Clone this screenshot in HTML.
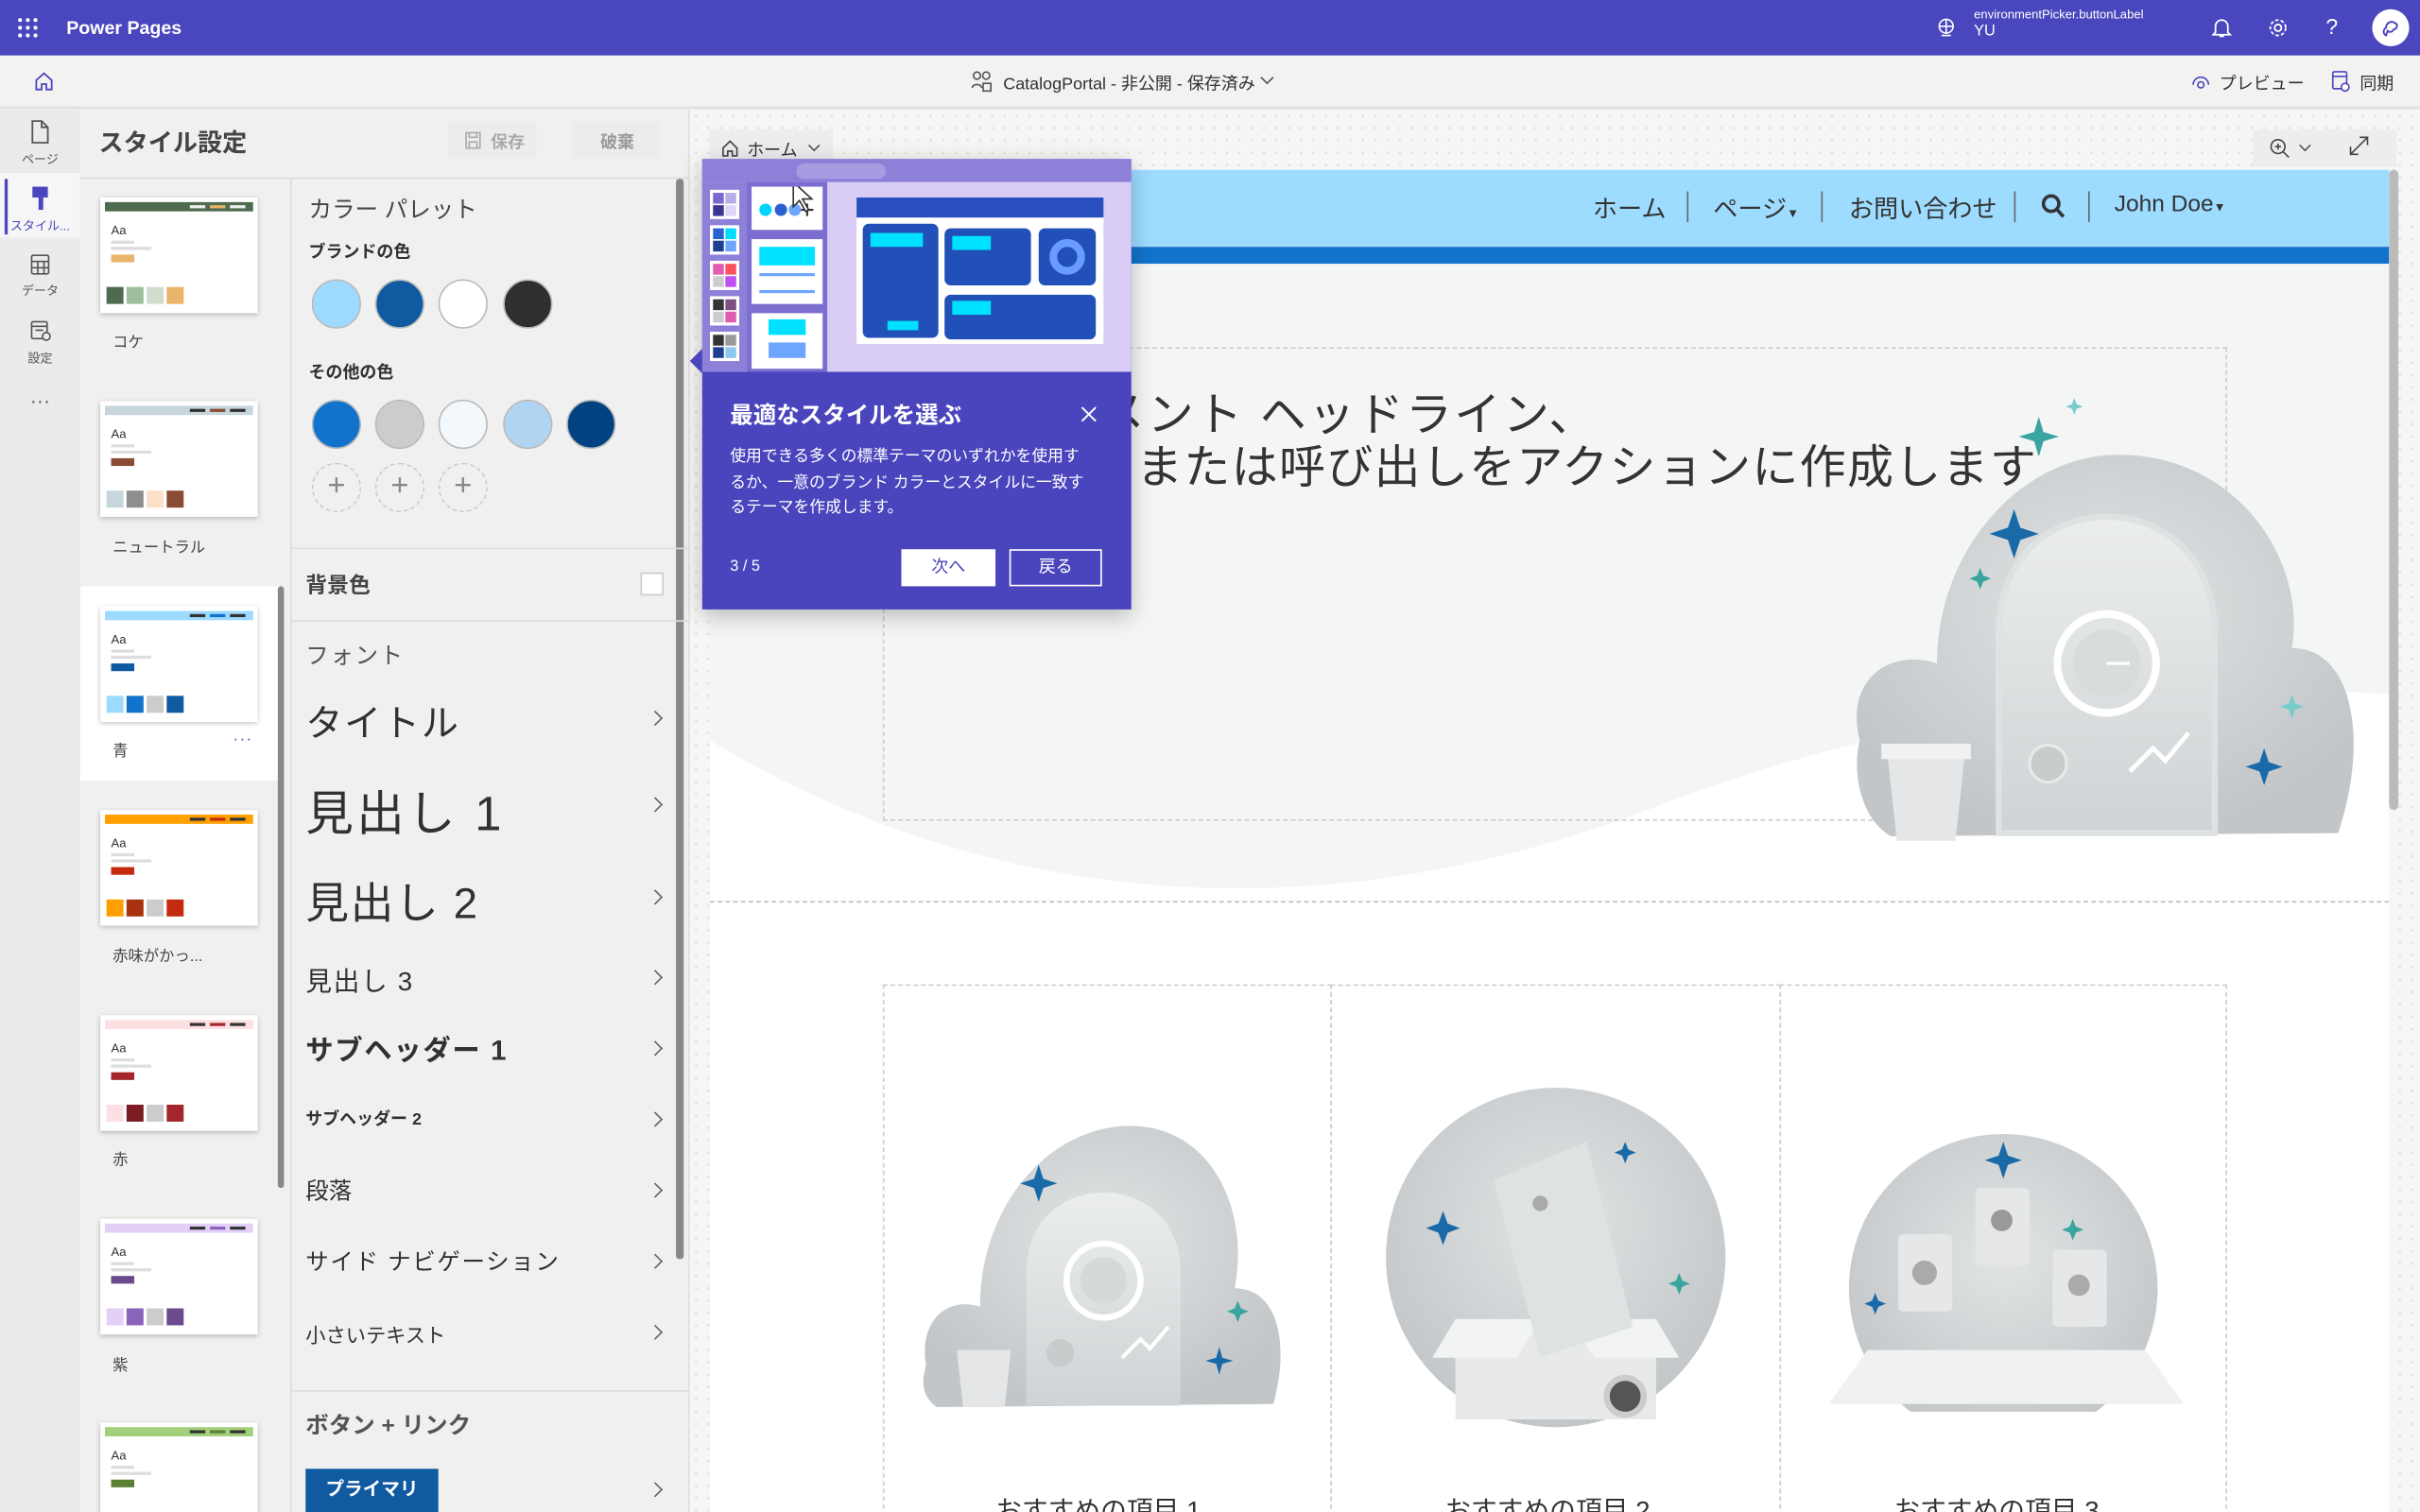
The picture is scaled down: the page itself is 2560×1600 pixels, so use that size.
<!DOCTYPE html>
<html><head><meta charset="utf-8">
<style>
*{box-sizing:border-box;margin:0;padding:0}
html,body{width:2560px;height:1600px;overflow:hidden;background:#fff}
body{font-family:"Liberation Sans","Noto Sans CJK JP",sans-serif;color:#323130}
#w{position:absolute;left:0;top:0;width:1568px;height:980px;transform:scale(1.632653);transform-origin:0 0;overflow:hidden;background:#f3f2f1}
.a{position:absolute}
.t{position:absolute;white-space:nowrap}
.card{position:absolute;left:65px;width:102px;height:75px;background:#fff;box-shadow:0 1px 3px rgba(0,0,0,.25)}
.card .s{position:absolute;left:3px;right:3px;top:3px;height:6px}
.card .d{position:absolute;top:5px;width:10px;height:1.5px;background:#333}
.card .aa{position:absolute;left:7px;top:17px;font-size:8px;color:#333}
.card .l{position:absolute;left:7px;height:1.5px;background:#ddd}
.card .b{position:absolute;left:7px;top:37px;width:15px;height:5px}
.card .sw{position:absolute;top:58px;width:11px;height:11px}
.lbl{position:absolute;left:73px;font-size:10px;color:#444}
.circ{position:absolute;width:32px;height:32px;border-radius:50%;border:1px solid #bbb}
.plus{position:absolute;width:32px;height:32px;border-radius:50%;border:1px dashed #ccc;color:#888;font-size:20px;line-height:29px;text-align:center;font-weight:300}
.fr{position:absolute;left:198px;color:#323130;white-space:nowrap}
.chev{position:absolute;left:421px;width:7px;height:7px;border-right:1px solid #666;border-top:1px solid #666;transform:rotate(45deg)}
.sep{position:absolute;left:188px;width:258px;height:1px;background:#dedede}
.rail{position:absolute;left:0;width:52px;text-align:center;font-size:8px;color:#555}
.nav{position:absolute;top:122px;font-size:16px;color:#333;white-space:nowrap}
.vs{position:absolute;top:124px;width:1px;height:20px;background:#666}
</style></head><body><div id="w">

<!-- top bar -->
<div class="a" style="left:0;top:0;width:1568px;height:36px;background:#4a46bd"></div>
<svg class="a" style="left:11px;top:11px" width="14" height="14"><g fill="#fff"><circle cx="2" cy="2" r="1.3"/><circle cx="7" cy="2" r="1.3"/><circle cx="12" cy="2" r="1.3"/><circle cx="2" cy="7" r="1.3"/><circle cx="7" cy="7" r="1.3"/><circle cx="12" cy="7" r="1.3"/><circle cx="2" cy="12" r="1.3"/><circle cx="7" cy="12" r="1.3"/><circle cx="12" cy="12" r="1.3"/></g></svg>
<div class="t" style="left:43px;top:11px;font-size:12px;color:#fff;font-weight:bold">Power Pages</div>
<svg class="a" style="left:1254px;top:11px" width="14" height="14" fill="none" stroke="#fff" stroke-width="1"><circle cx="7" cy="6" r="4.5"/><path d="M2.5 6h9M7 1.5v9M4 12h6"/></svg>
<div class="t" style="left:1279px;top:5px;font-size:8px;color:#fff">environmentPicker.buttonLabel</div>
<div class="t" style="left:1279px;top:15px;font-size:10px;color:#fff">YU</div>
<svg class="a" style="left:1433px;top:11px" width="13" height="14" fill="none" stroke="#fff" stroke-width="1.1"><path d="M2.5 10V6a4 4 0 0 1 8 0v4l1.5 1.5H1z M5 12.5h3"/></svg>
<svg class="a" style="left:1469px;top:11px" width="14" height="14" fill="none" stroke="#fff" stroke-width="1.1"><circle cx="7" cy="7" r="2.2"/><circle cx="7" cy="7" r="5" stroke-dasharray="2.2 1.4"/></svg>
<div class="t" style="left:1507px;top:9px;font-size:14px;color:#fff">?</div>
<div class="a" style="left:1537px;top:6px;width:24px;height:24px;border-radius:50%;background:#fff"></div>
<svg class="a" style="left:1541px;top:10px" width="16" height="16" fill="none" stroke="#4a46bd" stroke-width="1.2"><path d="M5 13c-2-1-2-4 0-5 0-3 3-5 6-3 2 1 1 4-1 4-1 2-3 2-4 1z"/></svg>

<!-- second bar -->
<div class="a" style="left:0;top:36px;width:1568px;height:34px;background:#f3f2f1;border-bottom:1px solid #e1dfdd;box-shadow:0 1px 2px rgba(0,0,0,.08)"></div>
<svg class="a" style="left:22px;top:46px" width="13" height="13" fill="none" stroke="#4a46bd" stroke-width="1.1"><path d="M1.5 6L6.5 1.5 11.5 6V12H8V8.5H5V12H1.5z"/></svg>
<svg class="a" style="left:629px;top:45px" width="14" height="15" fill="none" stroke="#555" stroke-width="1"><circle cx="4" cy="4" r="2.3"/><circle cx="10" cy="4" r="2.3"/><path d="M1 12c0-3 6-3 6 0M8 9h5v5H8z"/></svg>
<div class="t" style="left:650px;top:46px;font-size:11px;color:#323130">CatalogPortal - 非公開 - 保存済み</div>
<svg class="a" style="left:816px;top:49px" width="10" height="7" fill="none" stroke="#555"><path d="M1 1l4 4 4-4"/></svg>
<svg class="a" style="left:1419px;top:46px" width="14" height="14" fill="none" stroke="#4a46bd" stroke-width="1"><path d="M2 9a5 5 0 0 1 10 0"/><circle cx="7" cy="9" r="2"/></svg>
<div class="t" style="left:1438px;top:46px;font-size:11px;color:#323130">プレビュー</div>
<svg class="a" style="left:1510px;top:45px" width="13" height="15" fill="none" stroke="#4a46bd" stroke-width="1"><rect x="1.5" y="1.5" width="9" height="11" rx="1"/><path d="M1.5 4.5h9"/><circle cx="9.5" cy="11.5" r="2.5" fill="#fff"/></svg>
<div class="t" style="left:1529px;top:46px;font-size:11px;color:#323130">同期</div>

<!-- left rail -->
<div class="a" style="left:0;top:71px;width:52px;height:909px;background:#ebebeb"></div>
<div class="a" style="left:0;top:112px;width:52px;height:42px;background:#f6f6f6"></div>
<div class="a" style="left:3px;top:116px;width:2px;height:36px;background:#4a46bd"></div>
<svg class="a" style="left:19px;top:77px" width="14" height="17" fill="none" stroke="#555" stroke-width="1.1"><path d="M2 1.5h6l4 4V15.5H2z M8 1.5v4h4"/></svg>
<div class="rail" style="top:98px">ページ</div>
<svg class="a" style="left:19px;top:120px" width="14" height="17"><rect x="2" y="1" width="10" height="7" fill="#4a46bd"/><rect x="6" y="8" width="3" height="8" fill="#4a46bd"/></svg>
<div class="rail" style="top:141px;color:#4a46bd">スタイル...</div>
<svg class="a" style="left:19px;top:164px" width="14" height="15" fill="none" stroke="#555" stroke-width="1"><rect x="1.5" y="1.5" width="11" height="12" rx="1"/><path d="M1.5 5.5h11M1.5 9.5h11M5.5 5.5v8M9.5 5.5v8"/></svg>
<div class="rail" style="top:183px">データ</div>
<svg class="a" style="left:19px;top:207px" width="15" height="15" fill="none" stroke="#555" stroke-width="1"><rect x="1.5" y="1.5" width="10" height="11" rx="1"/><path d="M1.5 4.5h10M4 7h5"/><circle cx="11" cy="11" r="2.5" fill="#ebebeb"/></svg>
<div class="rail" style="top:227px">設定</div>
<div class="rail" style="top:252px;font-size:13px;color:#555">···</div>

<!-- style panel -->
<div class="a" style="left:52px;top:71px;width:395px;height:909px;background:#f0f0f0;border-right:1px solid #e0e0e0"></div>
<div class="t" style="left:64px;top:79px;font-size:16px;font-weight:bold;color:#444">スタイル設定</div>
<div class="a" style="left:290px;top:79px;width:58px;height:24px;background:#ececec"></div>
<svg class="a" style="left:301px;top:85px" width="11" height="12" fill="none" stroke="#aaa"><rect x="1" y="1" width="9" height="10"/><path d="M3 1v3h5V1M3 11V7h5v4"/></svg>
<div class="t" style="left:318px;top:84px;font-size:11px;color:#aaa;font-weight:bold">保存</div>
<div class="a" style="left:370px;top:79px;width:58px;height:24px;background:#ececec"></div>
<div class="t" style="left:389px;top:84px;font-size:11px;color:#999;font-weight:bold">破棄</div>
<div class="a" style="left:52px;top:115px;width:395px;height:1px;background:#dcdcdc"></div>
<div class="a" style="left:188px;top:115px;width:1px;height:865px;background:#dcdcdc"></div>

<div class="a" style="left:52px;top:380px;width:131px;height:126px;background:#fff"></div>
<div class="a" style="left:180px;top:380px;width:4px;height:390px;background:#888;border-radius:2px"></div>

<!-- cards -->
<div class="card" style="top:128px"><div class="s" style="background:#4f6b4f"></div><div class="d" style="left:58px;background:#eee"></div><div class="d" style="left:71px;background:#e9b56a"></div><div class="d" style="left:84px;background:#eee"></div><div class="aa">Aa</div><div class="l" style="top:28px;width:15px"></div><div class="l" style="top:32px;width:26px"></div><div class="b" style="background:#e9b56a"></div><div class="sw" style="left:4px;background:#4f6b4f"></div><div class="sw" style="left:17px;background:#9dbf9d"></div><div class="sw" style="left:30px;background:#d0dccc"></div><div class="sw" style="left:43px;background:#e9b56a"></div></div>
<div class="lbl" style="top:213px">コケ</div>
<div class="card" style="top:260px"><div class="s" style="background:#c6d6dc"></div><div class="d" style="left:58px"></div><div class="d" style="left:71px;background:#8a4a33"></div><div class="d" style="left:84px"></div><div class="aa">Aa</div><div class="l" style="top:28px;width:15px"></div><div class="l" style="top:32px;width:26px"></div><div class="b" style="background:#8a4a33"></div><div class="sw" style="left:4px;background:#c6d6dc"></div><div class="sw" style="left:17px;background:#8e8e8e"></div><div class="sw" style="left:30px;background:#fbe0c8"></div><div class="sw" style="left:43px;background:#8a4a33"></div></div>
<div class="lbl" style="top:346px">ニュートラル</div>
<div class="card" style="top:393px"><div class="s" style="background:#9ddaff"></div><div class="d" style="left:58px"></div><div class="d" style="left:71px;background:#1273cc"></div><div class="d" style="left:84px"></div><div class="aa">Aa</div><div class="l" style="top:28px;width:15px"></div><div class="l" style="top:32px;width:26px"></div><div class="b" style="background:#0f5aa0"></div><div class="sw" style="left:4px;background:#9ddaff"></div><div class="sw" style="left:17px;background:#1273cc"></div><div class="sw" style="left:30px;background:#ccc"></div><div class="sw" style="left:43px;background:#0f5aa0"></div></div>
<div class="lbl" style="top:478px">青</div>
<div class="t" style="left:151px;top:474px;font-size:10px;color:#4a46bd;letter-spacing:1px">···</div>
<div class="card" style="top:525px"><div class="s" style="background:#ffa000"></div><div class="d" style="left:58px"></div><div class="d" style="left:71px;background:#c42b0e"></div><div class="d" style="left:84px"></div><div class="aa">Aa</div><div class="l" style="top:28px;width:15px"></div><div class="l" style="top:32px;width:26px"></div><div class="b" style="background:#c42b0e"></div><div class="sw" style="left:4px;background:#ffa000"></div><div class="sw" style="left:17px;background:#a8320e"></div><div class="sw" style="left:30px;background:#ccc"></div><div class="sw" style="left:43px;background:#c42b0e"></div></div>
<div class="lbl" style="top:611px">赤味がかっ...</div>
<div class="card" style="top:658px"><div class="s" style="background:#fde0e4"></div><div class="d" style="left:58px"></div><div class="d" style="left:71px;background:#a4262c"></div><div class="d" style="left:84px"></div><div class="aa">Aa</div><div class="l" style="top:28px;width:15px"></div><div class="l" style="top:32px;width:26px"></div><div class="b" style="background:#a4262c"></div><div class="sw" style="left:4px;background:#fde0e4"></div><div class="sw" style="left:17px;background:#7b1c22"></div><div class="sw" style="left:30px;background:#ccc"></div><div class="sw" style="left:43px;background:#a4262c"></div></div>
<div class="lbl" style="top:743px">赤</div>
<div class="card" style="top:790px"><div class="s" style="background:#e4cff7"></div><div class="d" style="left:58px"></div><div class="d" style="left:71px;background:#8a63bc"></div><div class="d" style="left:84px"></div><div class="aa">Aa</div><div class="l" style="top:28px;width:15px"></div><div class="l" style="top:32px;width:26px"></div><div class="b" style="background:#6b4a8e"></div><div class="sw" style="left:4px;background:#e4cff7"></div><div class="sw" style="left:17px;background:#8a63bc"></div><div class="sw" style="left:30px;background:#ccc"></div><div class="sw" style="left:43px;background:#6b4a8e"></div></div>
<div class="lbl" style="top:876px">紫</div>
<div class="card" style="top:922px"><div class="s" style="background:#a4cf7a"></div><div class="d" style="left:58px"></div><div class="d" style="left:71px;background:#5a7f35"></div><div class="d" style="left:84px"></div><div class="aa">Aa</div><div class="l" style="top:28px;width:15px"></div><div class="l" style="top:32px;width:26px"></div><div class="b" style="background:#5a7f35"></div></div>

<!-- color panel -->
<div class="a" style="left:438px;top:116px;width:5px;height:700px;background:#888;border-radius:2px"></div>
<div class="fr" style="left:200px;top:125px;font-size:15px;color:#444">カラー パレット</div>
<div class="fr" style="left:200px;top:155px;font-size:11px;font-weight:bold">ブランドの色</div>
<div class="circ" style="left:202px;top:181px;background:#9ddaff"></div>
<div class="circ" style="left:243px;top:181px;background:#0f5aa0"></div>
<div class="circ" style="left:284px;top:181px;background:#fff"></div>
<div class="circ" style="left:326px;top:181px;background:#2f2f2f"></div>
<div class="fr" style="left:200px;top:233px;font-size:11px;font-weight:bold">その他の色</div>
<div class="circ" style="left:202px;top:259px;background:#1273cc"></div>
<div class="circ" style="left:243px;top:259px;background:#cccccc"></div>
<div class="circ" style="left:284px;top:259px;background:#f3f8fc"></div>
<div class="circ" style="left:326px;top:259px;background:#b0d4f1"></div>
<div class="circ" style="left:367px;top:259px;background:#004282"></div>
<div class="plus" style="left:202px;top:300px">+</div>
<div class="plus" style="left:243px;top:300px">+</div>
<div class="plus" style="left:284px;top:300px">+</div>
<div class="sep" style="top:355px"></div>
<div class="fr" style="top:369px;font-size:14px;font-weight:bold;color:#444">背景色</div>
<div class="a" style="left:415px;top:371px;width:15px;height:15px;background:#fff;border:1px solid #ccc"></div>
<div class="sep" style="top:402px"></div>
<div class="fr" style="top:414px;font-size:15px;color:#555;letter-spacing:1px">フォント</div>
<div class="fr" style="top:449px;font-size:24px;letter-spacing:1px">タイトル</div><div class="chev" style="top:462px"></div>
<div class="fr" style="top:502px;font-size:31px;letter-spacing:2px">見出し 1</div><div class="chev" style="top:518px"></div>
<div class="fr" style="top:564px;font-size:28px;letter-spacing:1px">見出し 2</div><div class="chev" style="top:578px"></div>
<div class="fr" style="top:622px;font-size:17px;letter-spacing:1px">見出し 3</div><div class="chev" style="top:630px"></div>
<div class="fr" style="top:667px;font-size:18px;font-weight:bold;letter-spacing:1px">サブヘッダー 1</div><div class="chev" style="top:676px"></div>
<div class="fr" style="top:717px;font-size:11px;font-weight:bold">サブヘッダー 2</div><div class="chev" style="top:722px"></div>
<div class="fr" style="top:761px;font-size:15px">段落</div><div class="chev" style="top:768px"></div>
<div class="fr" style="top:807px;font-size:15px;letter-spacing:1px">サイド ナビゲーション</div><div class="chev" style="top:814px"></div>
<div class="fr" style="top:855px;font-size:13px">小さいテキスト</div><div class="chev" style="top:860px"></div>
<div class="sep" style="top:901px"></div>
<div class="fr" style="top:913px;font-size:15px;font-weight:bold;color:#555">ボタン + リンク</div>
<div class="a" style="left:198px;top:952px;width:86px;height:30px;background:#0f5aa0;color:#fff;font-size:12px;font-weight:bold;text-align:center;line-height:26px">プライマリ</div>
<div class="chev" style="top:962px"></div>

<!-- canvas -->
<div class="a" style="left:447px;top:71px;width:1121px;height:909px;background-color:#f7f6f5;background-image:radial-gradient(#e4e2e0 0.8px,transparent 1px);background-size:8px 8px"></div>
<div class="a" style="left:460px;top:84px;width:80px;height:24px;background:#eeeded"></div>
<svg class="a" style="left:467px;top:90px" width="12" height="12" fill="none" stroke="#444" stroke-width="1"><path d="M1.5 6L6 1.5 10.5 6V11H7.5V8H4.5V11H1.5z"/></svg>
<div class="t" style="left:484px;top:89px;font-size:11px;color:#333">ホーム</div>
<svg class="a" style="left:523px;top:93px" width="9" height="6" fill="none" stroke="#555"><path d="M1 1l3.5 3.5L8 1"/></svg>
<div class="a" style="left:1460px;top:84px;width:93px;height:24px;background:#eeeded"></div>
<svg class="a" style="left:1470px;top:89px" width="14" height="14" fill="none" stroke="#444" stroke-width="1"><circle cx="6" cy="6" r="4.5"/><path d="M9.5 9.5L13 13M6 4v4M4 6h4"/></svg>
<svg class="a" style="left:1489px;top:93px" width="9" height="6" fill="none" stroke="#555"><path d="M1 1l3.5 3.5L8 1"/></svg>
<svg class="a" style="left:1522px;top:88px" width="13" height="13" fill="none" stroke="#444" stroke-width="1"><path d="M1 12L12 1M7 1h5v5M1 7v5h5"/></svg>

<!-- site preview -->
<div class="a" style="left:460px;top:110px;width:1088px;height:870px;background:#fff;overflow:hidden">
  <div class="a" style="left:0;top:0;width:1088px;height:50px;background:#9ddbff"></div>
  <div class="a" style="left:0;top:50px;width:1088px;height:11px;background:#1273cc"></div>
  <div class="a" style="left:0;top:61px;width:1088px;height:415px;background:#f4f5f5"></div>
  <svg class="a" style="left:0;top:330px" width="1088" height="150"><path d="M0 40 C 200 160, 420 160, 620 80 C 780 20, 950 0, 1088 10 L1088 150 L0 150z" fill="#fff"/></svg>
  <div class="a" style="left:0;top:474px;width:1088px;height:0;border-top:1px dashed #bbb"></div>
</div>
<div class="nav" style="left:1032px">ホーム</div><div class="vs" style="left:1093px"></div>
<div class="nav" style="left:1110px">ページ<span style="font-size:8px">▼</span></div><div class="vs" style="left:1180px"></div>
<div class="nav" style="left:1198px">お問い合わせ</div><div class="vs" style="left:1305px"></div>
<svg class="a" style="left:1322px;top:125px" width="17" height="18" fill="none" stroke="#333" stroke-width="2.2"><circle cx="7" cy="7" r="5"/><path d="M10.5 10.5L15 15.5"/></svg>
<div class="vs" style="left:1353px"></div>
<div class="nav" style="left:1370px;top:124px;font-size:15px">John Doe<span style="font-size:8px">▼</span></div>

<div class="a" style="left:572px;top:225px;width:871px;height:307px;border:1px dashed #ccc"></div>
<div class="t" style="right:533px;top:244px;font-size:30px;color:#333;letter-spacing:1.5px">ドキュメント ヘッドライン、</div>
<div class="t" style="right:248px;top:278px;font-size:30px;color:#333;letter-spacing:0.8px">テキストまたは呼び出しをアクションに作成します</div>

<!-- hero illustration -->
<svg class="a" style="left:1195px;top:250px" width="340" height="300">
<defs><radialGradient id="g1" cx="50%" cy="40%" r="60%"><stop offset="0" stop-color="#e2e4e5"/><stop offset="1" stop-color="#c2c6c8"/></radialGradient>
<linearGradient id="g2" x1="0" y1="0" x2="0" y2="1"><stop offset="0" stop-color="#eceeee"/><stop offset="1" stop-color="#cfd3d5"/></linearGradient></defs>
<path d="M10 230 C0 190 30 170 60 180 C60 110 110 50 170 45 C250 40 300 110 290 170 C330 170 340 230 320 290 L30 292 C10 280 5 250 10 230z" fill="url(#g1)"/>
<path d="M100 290 V160 C100 110 135 85 170 85 C205 85 240 110 240 160 V290z" fill="url(#g2)" stroke="#dfe2e3" stroke-width="4"/>
<circle cx="170" cy="180" r="32" fill="none" stroke="#fff" stroke-width="5"/><circle cx="170" cy="180" r="22" fill="#d8dcdd"/><path d="M170 180h15" stroke="#fff" stroke-width="2"/>
<circle cx="132" cy="245" r="12" fill="#c8cccd" stroke="#e8e8e8" stroke-width="2"/>
<path d="M185 250l15-15 8 8 15-18" fill="none" stroke="#fff" stroke-width="3"/>
<path d="M28 240h50l-6 55H34z" fill="#e4e6e7"/><rect x="24" y="232" width="58" height="10" fill="#f0f1f1"/>
<path d="M110 80l4 12 12 4-12 4-4 12-4-12-12-4 12-4z" fill="#1a6aa8"/>
<path d="M272 235l3 9 9 3-9 3-3 9-3-9-9-3 9-3z" fill="#1a6aa8"/>
<path d="M126 20l3 10 10 3-10 3-3 10-3-10-10-3 10-3z" fill="#3aa5a0"/>
<path d="M149 8l1.5 4 4 1.5-4 1.5-1.5 4-1.5-4-4-1.5 4-1.5z" fill="#7cc"/>
<path d="M290 200l2 6 6 2-6 2-2 6-2-6-6-2 6-2z" fill="#7cc"/>
<path d="M88 118l2 5 5 2-5 2-2 5-2-5-5-2 5-2z" fill="#3aa5a0"/>
</svg>

<!-- feature columns -->
<div class="a" style="left:572px;top:638px;width:291px;height:350px;border:1px dashed #ccc;border-bottom:none"></div>
<div class="a" style="left:862px;top:638px;width:292px;height:350px;border:1px dashed #ccc;border-bottom:none"></div>
<div class="a" style="left:1153px;top:638px;width:290px;height:350px;border:1px dashed #ccc;border-bottom:none"></div>
<svg class="a" style="left:595px;top:725px" width="240" height="190">
<path d="M5 160 C0 130 20 115 40 122 C40 60 80 10 130 5 C190 0 215 60 205 110 C235 110 240 150 230 185 L12 187 C2 180 2 170 5 160z" fill="url(#g1)"/>
<path d="M70 186 V100 C70 65 95 48 120 48 C145 48 170 65 170 100 V186z" fill="url(#g2)"/>
<circle cx="120" cy="105" r="24" fill="none" stroke="#fff" stroke-width="4"/><circle cx="120" cy="105" r="15" fill="#d5d9da"/>
<circle cx="92" cy="152" r="9" fill="#c8cccd"/><path d="M132 155l12-12 6 6 12-14" fill="none" stroke="#fff" stroke-width="2.5"/>
<path d="M25 150h35l-4 37H29z" fill="#e4e6e7"/>
<path d="M78 30l3 9 9 3-9 3-3 9-3-9-9-3 9-3z" fill="#1a6aa8"/><path d="M195 148l2 7 7 2-7 2-2 7-2-7-7-2 7-2z" fill="#1a6aa8"/><path d="M207 118l2 5 5 2-5 2-2 5-2-5-5-2 5-2z" fill="#3aa5a0"/>
</svg>
<svg class="a" style="left:893px;top:705px" width="230" height="225">
<circle cx="115" cy="110" r="110" fill="url(#g1)"/>
<path d="M50 150h130v65H50z" fill="#e8eaea"/><path d="M50 150l-15 25h55l15-25zM180 150l15 25h-55l-15-25z" fill="#f2f3f3"/>
<path d="M75 60l60-25 30 120-60 20z" fill="#dfe2e3"/><circle cx="105" cy="75" r="5" fill="#aaa"/>
<circle cx="160" cy="200" r="12" fill="#555" stroke="#ccc" stroke-width="4"/>
<path d="M42 80l3 8 8 3-8 3-3 8-3-8-8-3 8-3z" fill="#1a6aa8"/><path d="M195 120l2 5 5 2-5 2-2 5-2-5-5-2 5-2z" fill="#3aa5a0"/><path d="M160 35l2 5 5 2-5 2-2 5-2-5-5-2 5-2z" fill="#1a6aa8"/>
</svg>
<svg class="a" style="left:1185px;top:730px" width="230" height="185">
<circle cx="113" cy="105" r="100" fill="url(#g1)"/>
<path d="M0 180l25-35 180 0 25 35z" fill="#f0f1f1"/>
<rect x="45" y="70" width="35" height="50" rx="3" fill="#e5e7e8"/><circle cx="62" cy="95" r="8" fill="#aaa"/>
<rect x="95" y="40" width="35" height="50" rx="3" fill="#e5e7e8"/><circle cx="112" cy="61" r="7" fill="#999"/>
<rect x="145" y="80" width="35" height="50" rx="3" fill="#e5e7e8"/><circle cx="162" cy="103" r="7" fill="#aaa"/>
<path d="M113 10l3 9 9 3-9 3-3 9-3-9-9-3 9-3z" fill="#1a6aa8"/><path d="M30 108l2 5 5 2-5 2-2 5-2-5-5-2 5-2z" fill="#1a6aa8"/><path d="M158 60l2 5 5 2-5 2-2 5-2-5-5-2 5-2z" fill="#3aa5a0"/>
</svg>
<div class="t" style="left:645px;top:965px;font-size:17px;color:#333">おすすめの項目 1</div>
<div class="t" style="left:936px;top:965px;font-size:17px;color:#333">おすすめの項目 2</div>
<div class="t" style="left:1227px;top:965px;font-size:17px;color:#333">おすすめの項目 3</div>
<div class="a" style="left:1548px;top:110px;width:6px;height:415px;background:#bbb;border-radius:3px"></div>

<!-- teaching popup -->
<div class="a" style="left:455px;top:103px;width:278px;height:292px;background:#4a44bd;box-shadow:0 4px 14px rgba(0,0,0,.25)">
  <div class="a" style="left:0;top:0;width:278px;height:138px;background:#d9ccf5"></div>
  <div class="a" style="left:0;top:0;width:278px;height:15px;background:#8d80d8"></div>
  <div class="a" style="left:61px;top:3px;width:58px;height:10px;border-radius:5px;background:#a89be2"></div>
  <div class="a" style="left:0;top:15px;width:30px;height:123px;background:#8d80d8"></div>
  <div class="a" style="left:29px;top:15px;width:52px;height:123px;background:#7c6ed0"></div>
  <div class="a" style="left:5px;top:20px;width:19px;height:19px;background:#fff"></div>
  <div class="a" style="left:5px;top:43px;width:19px;height:19px;background:#fff"></div>
  <div class="a" style="left:5px;top:66px;width:19px;height:19px;background:#fff"></div>
  <div class="a" style="left:5px;top:89px;width:19px;height:19px;background:#fff"></div>
  <div class="a" style="left:5px;top:112px;width:19px;height:19px;background:#fff"></div>
  <svg class="a" style="left:5px;top:20px" width="19" height="112"><g><rect x="2" y="2" width="7" height="7" fill="#7868d0"/><rect x="10" y="2" width="7" height="7" fill="#b8ace8"/><rect x="2" y="10" width="7" height="7" fill="#3c3493"/><rect x="10" y="10" width="7" height="7" fill="#ddd4f8"/>
  <rect x="2" y="25" width="7" height="7" fill="#2962d0"/><rect x="10" y="25" width="7" height="7" fill="#00dcff"/><rect x="2" y="33" width="7" height="7" fill="#1e3f8f"/><rect x="10" y="33" width="7" height="7" fill="#6ea6ff"/>
  <rect x="2" y="48" width="7" height="7" fill="#e05cb0"/><rect x="10" y="48" width="7" height="7" fill="#ff5060"/><rect x="2" y="56" width="7" height="7" fill="#ccc"/><rect x="10" y="56" width="7" height="7" fill="#c050f0"/>
  <rect x="2" y="71" width="7" height="7" fill="#333"/><rect x="10" y="71" width="7" height="7" fill="#805080"/><rect x="2" y="79" width="7" height="7" fill="#ccc"/><rect x="10" y="79" width="7" height="7" fill="#e05cb0"/>
  <rect x="2" y="94" width="7" height="7" fill="#333"/><rect x="10" y="94" width="7" height="7" fill="#999"/><rect x="2" y="102" width="7" height="7" fill="#1e3f8f"/><rect x="10" y="102" width="7" height="7" fill="#8ec8f0"/></g></svg>
  <div class="a" style="left:32px;top:18px;width:46px;height:28px;background:#fff"></div>
  <svg class="a" style="left:32px;top:18px" width="46" height="28"><circle cx="9" cy="15" r="4" fill="#00d4ff"/><circle cx="19" cy="15" r="4" fill="#2962d0"/><circle cx="28" cy="15" r="4" fill="#6ea6ff"/><path d="M36 11v8M32 15h8" stroke="#333" stroke-width="1.3"/><path d="M27 -3l0 16 4-4 4 7 2-1-4-7 6 0z" fill="#fff" stroke="#333"/></svg>
  <div class="a" style="left:32px;top:52px;width:46px;height:42px;background:#fff"></div>
  <div class="a" style="left:37px;top:57px;width:36px;height:12px;background:#00e0ff"></div>
  <div class="a" style="left:37px;top:74px;width:36px;height:2px;background:#6ea6ff"></div>
  <div class="a" style="left:37px;top:85px;width:36px;height:1.5px;background:#6ea6ff"></div>
  <div class="a" style="left:32px;top:100px;width:46px;height:36px;background:#fff"></div>
  <div class="a" style="left:43px;top:104px;width:24px;height:10px;background:#00e0ff;border-bottom:3px solid #00e0ff"></div>
  <div class="a" style="left:43px;top:119px;width:24px;height:10px;background:#6ea6ff"></div>
  <div class="a" style="left:100px;top:25px;width:160px;height:95px;background:#fff"></div>
  <div class="a" style="left:100px;top:25px;width:160px;height:13px;background:#2a4fc0"></div>
  <div class="a" style="left:104px;top:42px;width:49px;height:74px;background:#2150b8;border-radius:4px"></div>
  <div class="a" style="left:109px;top:48px;width:34px;height:9px;background:#00e0ff"></div>
  <div class="a" style="left:120px;top:105px;width:20px;height:6px;background:#00e0ff"></div>
  <div class="a" style="left:157px;top:45px;width:56px;height:37px;background:#2150b8;border-radius:4px"></div>
  <div class="a" style="left:162px;top:50px;width:25px;height:9px;background:#00e0ff"></div>
  <div class="a" style="left:218px;top:45px;width:37px;height:37px;background:#2150b8;border-radius:4px"></div>
  <div class="a" style="left:225px;top:52px;width:23px;height:23px;border:5px solid #6a9cff;border-radius:50%"></div>
  <div class="a" style="left:157px;top:88px;width:98px;height:29px;background:#2150b8;border-radius:4px"></div>
  <div class="a" style="left:162px;top:92px;width:25px;height:9px;background:#00e0ff"></div>
  <div class="t" style="left:18px;top:155px;font-size:15px;font-weight:bold;color:#fff">最適なスタイルを選ぶ</div>
  <svg class="a" style="left:245px;top:160px" width="11" height="11" stroke="#fff" stroke-width="1.2"><path d="M1 1l9 9M10 1l-9 9"/></svg>
  <div class="a" style="left:18px;top:186px;width:250px;font-size:10.3px;line-height:16.5px;color:#fff;white-space:nowrap">使用できる多くの標準テーマのいずれかを使用す<br>るか、一意のブランド カラーとスタイルに一致す<br>るテーマを作成します。</div>
  <div class="t" style="left:18px;top:259px;font-size:10px;color:#fff">3 / 5</div>
  <div class="a" style="left:129px;top:253px;width:61px;height:24px;background:#fff;color:#4a44bd;font-size:11px;text-align:center;line-height:24px">次へ</div>
  <div class="a" style="left:199px;top:253px;width:60px;height:24px;border:1px solid #fff;color:#fff;font-size:11px;text-align:center;line-height:22px">戻る</div>
</div>
<div class="a" style="left:447px;top:226px;width:0;height:0;border-top:8px solid transparent;border-bottom:8px solid transparent;border-right:8px solid #4a44bd"></div>

</div></body></html>
